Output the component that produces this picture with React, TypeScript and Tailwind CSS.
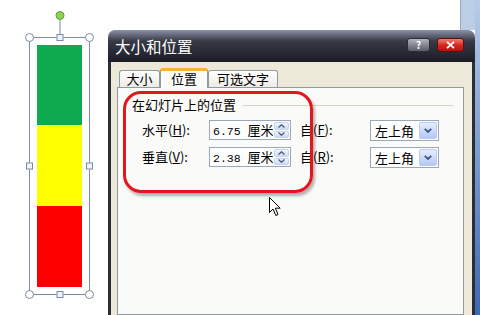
import React from 'react';

function Chevron({ dir }: { dir: 'up' | 'down' }) {
  return (
    <svg width="7" height="4" viewBox="0 0 7 4" className="block">
      <path
        d={dir === 'up' ? 'M0.5 3.5 L3.5 0.8 L6.5 3.5' : 'M0.5 0.5 L3.5 3.2 L6.5 0.5'}
        fill="none"
        stroke="#4d6185"
        strokeWidth="1.4"
      />
    </svg>
  );
}

function SpinBox({ value, unit }: { value: string; unit: string }) {
  return (
    <div className="w-[82px] h-[20px] flex items-stretch border border-[#9aa8bb] bg-white">
      <div className="flex-1 overflow-hidden whitespace-nowrap pl-[3px] text-[13px] leading-[18px]">
        <span className="font-['Liberation_Mono',monospace] text-[11.5px]">{value} </span>
        {unit}
      </div>
      <div className="w-[17px] flex flex-col gap-px p-px">
        <div className="flex-1 flex items-center justify-center rounded-[2px] border border-[#c5d3ee] bg-linear-to-b from-[#f2f6fe] to-[#cddaf6]">
          <Chevron dir="up" />
        </div>
        <div className="flex-1 flex items-center justify-center rounded-[2px] border border-[#c5d3ee] bg-linear-to-b from-[#f2f6fe] to-[#cddaf6]">
          <Chevron dir="down" />
        </div>
      </div>
    </div>
  );
}

function Select({ value }: { value: string }) {
  return (
    <div className="w-[69px] h-[21px] flex items-stretch border border-[#9aa8bb] bg-white">
      <div className="flex-1 pl-[4px] text-[13px] leading-[19px]">{value}</div>
      <div className="w-[18px] my-px mr-px flex items-center justify-center rounded-[2px] border border-[#b9cbf3] bg-linear-to-b from-[#e6edfd] to-[#b5c8f4]">
        <svg width="8" height="5" viewBox="0 0 8 5">
          <path d="M0.8 0.8 L4 4 L7.2 0.8" fill="none" stroke="#3e5584" strokeWidth="1.8" />
        </svg>
      </div>
    </div>
  );
}

function Row({ label, key1, field, from, key2 }: { label: string; key1: string; field: string; from: string; key2: string }) {
  return (
    <div className="flex items-center h-[20px] pl-[24px]">
      <div className="w-[67px] text-[13px] leading-[16px]">
        {label}(<span className="underline">{key1}</span>):
      </div>
      <SpinBox value={field} unit="厘米" />
      <div className="w-[70px] ml-[9px] text-[13px] leading-[16px]">
        {from}(<span className="underline">{key2}</span>):
      </div>
      <Select value="左上角" />
    </div>
  );
}

export default function App() {
  return (
    <div className="relative w-[480px] h-[315px] overflow-hidden bg-white flex font-['Noto_Sans_CJK_SC',sans-serif] text-black">
      {/* slide shape with selection */}
      <div className="w-[108px] shrink-0 pl-[29px] pt-[37px]">
        <div className="relative w-[61px] h-[258px] border border-[#7d8ca2] p-[7px]">
          <div className="flex flex-col h-full">
            <div className="h-[80px] bg-[#0fa94f]" />
            <div className="h-[81px] bg-[#ffff00]" />
            <div className="h-[81px] bg-[#ff0000]" />
          </div>
          {/* rotation handle */}
          <div className="absolute left-1/2 -translate-x-1/2 -top-[18px] w-px h-[18px] bg-[#7d8ca2]" />
          <div className="absolute left-1/2 -translate-x-1/2 -top-[27px] w-[9px] h-[9px] rounded-full border border-[#5f9a36] bg-[#8fd356]" />
          {/* corner handles */}
          <div className="absolute -left-[5px] -top-[5px] w-[9px] h-[9px] rounded-full border border-[#7d8ca2] bg-white" />
          <div className="absolute -right-[5px] -top-[5px] w-[9px] h-[9px] rounded-full border border-[#7d8ca2] bg-white" />
          <div className="absolute -left-[5px] -bottom-[5px] w-[9px] h-[9px] rounded-full border border-[#7d8ca2] bg-white" />
          <div className="absolute -right-[5px] -bottom-[5px] w-[9px] h-[9px] rounded-full border border-[#7d8ca2] bg-white" />
          {/* side handles */}
          <div className="absolute left-1/2 -translate-x-1/2 -top-[4px] w-[7px] h-[7px] border border-[#7d8ca2] bg-[#eef4fa]" />
          <div className="absolute left-1/2 -translate-x-1/2 -bottom-[4px] w-[7px] h-[7px] border border-[#7d8ca2] bg-[#eef4fa]" />
          <div className="absolute top-1/2 -translate-y-1/2 -left-[4px] w-[7px] h-[7px] border border-[#7d8ca2] bg-[#eef4fa]" />
          <div className="absolute top-1/2 -translate-y-1/2 -right-[4px] w-[7px] h-[7px] border border-[#7d8ca2] bg-[#eef4fa]" />
        </div>
      </div>

      {/* dialog */}
      <div className="w-[367px] shrink-0 flex flex-col">
        <div className="h-[30px] shrink-0 flex">
          <div className="flex-1" />
          <div className="w-[15px] border-l border-[#9ea6b3] bg-[#bccde6]" />
        </div>
        <div className="h-[32px] shrink-0 flex items-start rounded-t-[7px] bg-linear-to-b from-[#8e92a8] via-[#373a46] via-35% to-[#1b1e26] px-[7px]">
          <div className="mt-[7px] text-[15.5px] leading-[18px] text-white">大小和位置</div>
          <div className="flex-1" />
          <div className="mt-[8px] w-[23px] h-[14px] flex items-center justify-center rounded-[3px] border border-[#2c2e35] bg-linear-to-b from-[#b3b6be] to-[#5a5d66] text-[10px] leading-none font-bold text-white">
            ?
          </div>
          <div className="mt-[8px] ml-[7px] mr-[4px] w-[27px] h-[14px] flex items-center justify-center rounded-[3px] border border-[#5a1010] bg-linear-to-b from-[#ee7a6e] via-[#d42a20] to-[#b80e0e]">
            <svg width="9" height="8" viewBox="0 0 9 8">
              <path d="M1 0.8 L8 7.2 M8 0.8 L1 7.2" stroke="white" strokeWidth="1.8" />
            </svg>
          </div>
        </div>
        <div className="flex-1 flex flex-col border-x-[3px] border-[#2b2e37] bg-[#ece9d8] pl-[6px] pr-[8px] pt-[6px]">
          {/* tabs */}
          <div className="flex items-end h-[19px] pl-[2px]">
            <div className="w-[41px] h-[17px] rounded-t-[3px] border border-b-0 border-[#919b9c] bg-linear-to-b from-white to-[#ecebe5] text-center text-[13px] leading-[16px]">
              大小
            </div>
            <div className="relative z-10 w-[48px] h-[20px] -mb-px rounded-t-[3px] border-x border-[#919b9c] border-t-[3px] border-t-[#f0b43c] bg-[#fbfbf9] text-center text-[13px] leading-[16px]">
              位置
            </div>
            <div className="w-[70px] h-[17px] rounded-t-[3px] border border-b-0 border-[#919b9c] bg-linear-to-b from-white to-[#ecebe5] text-center text-[13px] leading-[16px]">
              可选文字
            </div>
          </div>
          {/* panel */}
          <div className="flex-1 border border-[#919b9c] bg-[#fafaf8] pt-[9px]">
            <div className="flex items-center pl-[14px] pr-[10px]">
              <div className="text-[13px] leading-[16px]">在幻灯片上的位置</div>
              <div className="flex-1 ml-[7px] h-px bg-[#d6d3c6]" />
            </div>
            <div className="mt-[7px] flex flex-col gap-[7px]">
              <Row label="水平" key1="H" field="6.75" from="自" key2="F" />
              <Row label="垂直" key1="V" field="2.38" from="自" key2="R" />
            </div>
          </div>
        </div>
      </div>

      {/* desktop edge */}
      <div className="flex-1 bg-linear-to-b from-[#b8cce8] to-[#3a68b4]" />

      {/* red annotation */}
      <div className="absolute left-[123px] top-[91px] w-[190px] h-[102px] rounded-[18px] border-[3px] border-[#e2161c] shadow-[2px_3px_3px_rgba(0,0,0,0.3)]" />

      {/* mouse cursor */}
      <svg className="absolute left-[269px] top-[197px]" width="13" height="20" viewBox="0 0 13 20">
        <path d="M0.5 0.5 L0.5 15.5 L4 12 L6.8 18.5 L9 17.5 L6.3 11.2 L11.2 11.2 Z" fill="white" stroke="black" strokeWidth="1" />
      </svg>
    </div>
  );
}
